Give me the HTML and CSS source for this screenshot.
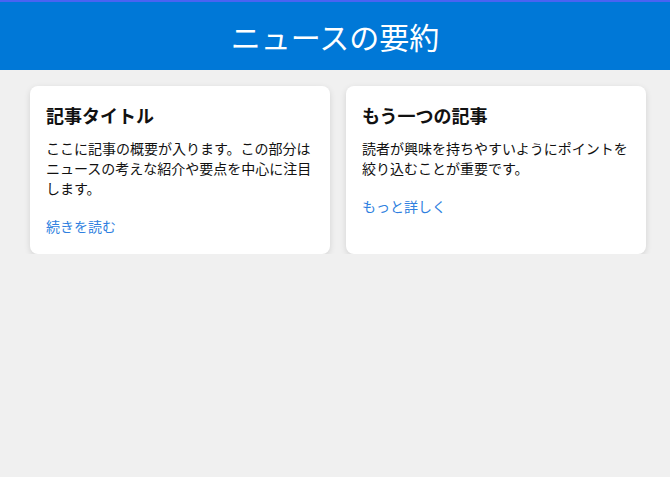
FILE: index.html
```html
<!DOCTYPE html>
<html lang="ja">
<head>
    <meta charset="UTF-8">
    <meta name="viewport" content="width=device-width, initial-scale=1.0">
    <title>ニュースの要約</title>
    <link rel="stylesheet" href="styles.css">
</head>
<body>
    <header class="site-header">
        <h1 class="site-title">ニュースの要約</h1>
    </header>
    <main class="news-list">
        <article class="news-card">
            <h2 class="news-title">記事タイトル</h2>
            <p class="news-summary">ここに記事の概要が入ります。この部分はニュースの考えな紹介や要点を中心に注目します。</p>
            <a href="#" class="news-link">続きを読む</a>
        </article>
        <article class="news-card">
            <h2 class="news-title">もう一つの記事</h2>
            <p class="news-summary">読者が興味を持ちやすいようにポイントを絞り込むことが重要です。</p>
            <a href="#" class="news-link">もっと詳しく</a>
        </article>
    </main>
</body>
</html>
```

FILE: styles.css
```css
body {
    font-family: "Noto Sans CJK JP", "Noto Sans", sans-serif;
    background-color: #f0f0f0;
    color: #111;
    margin: 0;
}

.site-header {
    background-color: #0078d7;
    border-top: 2px solid #4a63f2;
    height: 68px;
    display: flex;
    justify-content: center;
    align-items: center;
}

.site-title {
    margin: 0;
    color: #fff;
    font-size: 30px;
    font-weight: normal;
    line-height: 1;
}

.news-list {
    display: grid;
    grid-template-columns: 300px 300px;
    gap: 16px;
    padding: 16px 0 0 30px;
}

.news-card {
    background-color: #fff;
    border-radius: 8px;
    box-shadow: 0 2px 6px rgba(0, 0, 0, 0.12);
    padding: 16px 16px 18px;
}

.news-title {
    font-size: 18px;
    font-weight: bold;
    line-height: 27px;
    margin: 0 0 9px;
}

.news-summary {
    font-size: 14px;
    line-height: 20px;
    margin: 0 0 18px;
}

.news-link {
    display: block;
    font-size: 14px;
    line-height: 20px;
    color: #2f7fe0;
    text-decoration: none;
}
```
